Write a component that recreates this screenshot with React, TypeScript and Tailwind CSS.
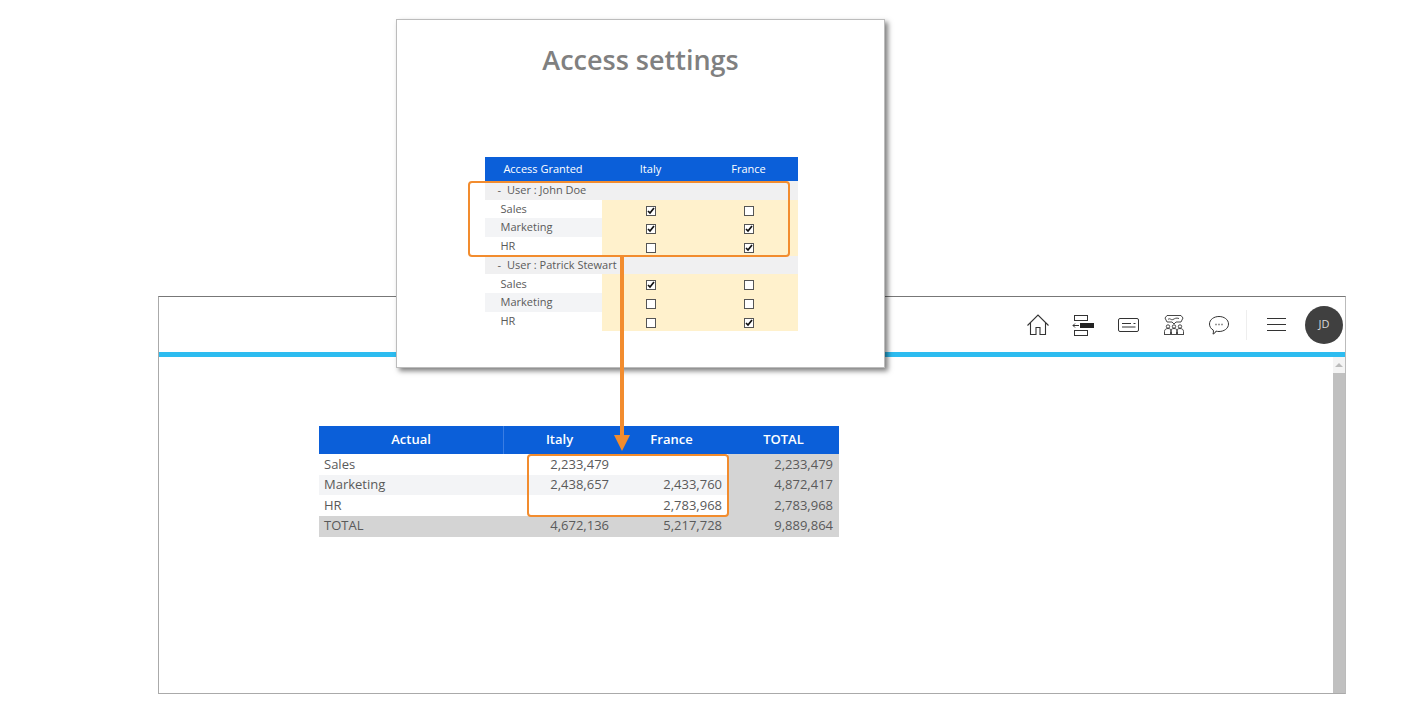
const font = "font-['Open_Sans',sans-serif]";

function Home() {
  return (
    <svg width="24" height="24" viewBox="0 0 24 24" fill="none" stroke="#333" strokeWidth="1.1">
      <path d="M1.5 12.5 12 2l10.5 10.5M4.5 10v11.5h5.5v-7h4v7h5.5V10" />
    </svg>
  );
}

function Hierarchy() {
  return (
    <svg width="24" height="24" viewBox="0 0 24 24" fill="none" stroke="#333" strokeWidth="1">
      <rect x="3.5" y="2.5" width="13" height="5" />
      <rect x="3.5" y="17.5" width="13" height="5" />
      <rect x="9" y="10" width="14" height="5" fill="#222" stroke="none" />
      <path d="M8 12.5H2M4 10.5l-2 2 2 2" />
    </svg>
  );
}

function Card() {
  return (
    <svg width="24" height="20" viewBox="0 0 24 20" fill="none" stroke="#333" strokeWidth="1">
      <rect x="1.5" y="3.5" width="20" height="13" rx="1.5" />
      <path d="M5 8.5h9M16.5 8.5h2M5 12h13.5" />
    </svg>
  );
}

function Team() {
  return (
    <svg width="24" height="24" viewBox="0 0 24 24" fill="none" stroke="#333" strokeWidth="0.9">
      <path d="M5 2.5h14l2 2.5-2 4h-5l-2 2-2-2H5L3 5z" />
      <path d="M6 6.5c2-2 3 1 5 0s3-2 6-1" />
      <circle cx="6" cy="13.5" r="1.7" />
      <circle cx="12" cy="13.5" r="1.7" />
      <circle cx="18" cy="13.5" r="1.7" />
      <path d="M2.5 21v-2.5c0-2 1.5-3 3.5-3s3.500 1 3.500 3V21M8.500 21v-2.500c0-2 1.500-3 3.500-3s3.500 1 3.500 3V21M14.500 21v-2.500c0-2 1.500-3 3.500-3s3.500 1 3.500 3V21M2 21.500h20" />
    </svg>
  );
}

function Bubble() {
  return (
    <svg width="22" height="22" viewBox="0 0 22 22" fill="none" stroke="#333" strokeWidth="1">
      <path d="M11 2.500c5 0 9.500 3 9.500 7.500s-4.500 7.500-9.500 7.500c-1 0-2-.1-3-.4-.5 1.500-1.500 2.500-3 3 .5-1.300.6-2.700.3-4C2.800 14.700 1.500 12.500 1.500 10c0-4.500 4.500-7.500 9.500-7.500z" />
      <path d="M7.500 10.500h1M10.500 10.500h1M13.500 10.500h1" strokeWidth="1.300" />
    </svg>
  );
}

function Check({ on }: { on: boolean }) {
  return (
    <span className="flex h-[10px] w-[10px] items-center justify-center border border-[#555] bg-white">
      {on && (
        <svg width="8" height="8" viewBox="0 0 8 8" fill="none" stroke="#111" strokeWidth="1.700">
          <path d="M1 4l2 2 4-5" />
        </svg>
      )}
    </span>
  );
}

const accessUsers = [
  {
    name: "User : John Doe",
    rows: [
      { label: "Sales", italy: true, france: false },
      { label: "Marketing", italy: true, france: true },
      { label: "HR", italy: false, france: true },
    ],
  },
  {
    name: "User : Patrick Stewart",
    rows: [
      { label: "Sales", italy: true, france: false },
      { label: "Marketing", italy: false, france: false },
      { label: "HR", italy: false, france: true },
    ],
  },
];

function AccessTable() {
  return (
    <div className="w-[313px] text-[11px] text-[#5a5a5a]">
      <div className="grid h-[24px] grid-cols-[117px_98px_98px] items-center bg-[#0b5fd9] text-white">
        <span className="text-center">Access Granted</span>
        <span className="text-center">Italy</span>
        <span className="text-center">France</span>
      </div>
      {accessUsers.map((user) => (
        <div key={user.name}>
          <div className="flex h-[18.700px] items-center bg-[#f0f0f1] pl-[13px]">
            <span className="mr-[6px]">-</span>
            {user.name}
          </div>
          {user.rows.map((row, i) => (
            <div key={row.label} className="grid h-[18.700px] grid-cols-[117px_98px_98px] items-center">
              <span className={`flex h-full items-center pl-[16px] ${i === 1 ? "bg-[#f3f4f6]" : ""}`}>{row.label}</span>
              <span className="flex h-full items-center justify-center bg-[#fff1cc] pt-[3px]">
                <Check on={row.italy} />
              </span>
              <span className="flex h-full items-center justify-center bg-[#fff1cc] pt-[3px]">
                <Check on={row.france} />
              </span>
            </div>
          ))}
        </div>
      ))}
    </div>
  );
}

const actuals = [
  { label: "Sales", italy: "2,233,479", france: "", total: "2,233,479" },
  { label: "Marketing", italy: "2,438,657", france: "2,433,760", total: "4,872,417" },
  { label: "HR", italy: "", france: "2,783,968", total: "2,783,968" },
];

function ActualTable() {
  return (
    <div className="w-[520px] text-[13px] text-[#5a5a5a]">
      <div className="grid h-[28px] grid-cols-[185px_111px_113px_111px] items-center bg-[#0b5fd9] font-semibold text-white">
        <span className="flex h-full items-center justify-center border-r border-[#3a7de3]">Actual</span>
        <span className="text-center">Italy</span>
        <span className="text-center">France</span>
        <span className="text-center">TOTAL</span>
      </div>
      {actuals.map((row, i) => (
        <div key={row.label} className="grid h-[20.500px] grid-cols-[185px_111px_113px_111px] items-center">
          <span className={`flex h-full items-center pl-[5px] ${i === 1 ? "bg-[#f3f4f6]" : ""}`}>{row.label}</span>
          <span className={`flex h-full items-center justify-end pr-[6px] ${i === 1 ? "bg-[#f3f4f6]" : ""}`}>{row.italy}</span>
          <span className={`flex h-full items-center justify-end pr-[6px] ${i === 1 ? "bg-[#f3f4f6]" : ""}`}>{row.france}</span>
          <span className="flex h-full items-center justify-end bg-[#d4d4d4] pr-[6px]">{row.total}</span>
        </div>
      ))}
      <div className="grid h-[21px] grid-cols-[185px_111px_113px_111px] items-center bg-[#d4d4d4]">
        <span className="pl-[5px]">TOTAL</span>
        <span className="pr-[6px] text-right">4,672,136</span>
        <span className="pr-[6px] text-right">5,217,728</span>
        <span className="pr-[6px] text-right">9,889,864</span>
      </div>
    </div>
  );
}

export default function App() {
  return (
    <div className={`relative h-[718px] w-[1415px] overflow-hidden bg-white pl-[158px] pt-[296px] ${font}`}>
      <div className="flex h-[398px] w-[1188px] flex-col border border-t-[#777] border-r-[#bbb] border-b-[#aaa] border-l-[#aaa]">
        <div className="flex h-[55px] items-center justify-end border-b-0 pr-[2px]">
          <div className="flex items-center">
            <span className="mr-[21px]"><Home /></span>
            <span className="mr-[22px]"><Hierarchy /></span>
            <span className="mr-[21px]"><Card /></span>
            <span className="mr-[22px]"><Team /></span>
            <span className="mr-[16px]"><Bubble /></span>
            <span className="mr-[20px] h-[30px] w-px bg-[#eeeeee]" />
            <span className="mr-[19px] flex w-[19px] flex-col gap-[5px]">
              <i className="h-px bg-[#333]" />
              <i className="h-px bg-[#333]" />
              <i className="h-px bg-[#333]" />
            </span>
            <span className="flex h-[38px] w-[38px] items-center justify-center rounded-full bg-[#404040] text-[11px] text-[#d8d8d8]">JD</span>
          </div>
        </div>
        <div className="h-[5px] bg-[#2dbcf0]" />
        <div className="flex min-h-0 flex-1">
          <div className="flex-1 pl-[160px] pt-[69px]">
            <ActualTable />
          </div>
          <div className="flex w-[12px] flex-col bg-[#f4f4f4]">
            <div className="flex h-[16px] items-center justify-center">
              <span className="h-0 w-0 border-x-[4px] border-b-[4px] border-x-transparent border-b-[#bbb]" />
            </div>
            <div className="flex-1 bg-[#c0c0c0]" />
          </div>
        </div>
      </div>

      {/* slide laid over the app */}
      <div className="absolute left-[396px] top-[19px] flex h-[349px] w-[489px] flex-col items-center border border-[#bcbcbc] bg-white shadow-[3px_3px_5px_rgba(0,0,0,0.5)]">
        <h1 className="mt-[21px] pl-[0px] text-[27px] font-semibold leading-[38px] text-[#808080]">Access settings</h1>
        <div className="ml-[1px] mt-[78px]">
          <AccessTable />
        </div>
      </div>

      {/* callouts */}
      <div className="absolute left-[468px] top-[181px] h-[76px] w-[322px] rounded-[4px] border-2 border-[#f28c2e]" />
      <div className="absolute left-[527px] top-[454px] h-[63px] w-[202px] rounded-[4px] border-2 border-[#f28c2e]" />
      <div className="absolute left-[620px] top-[257px] h-[179px] w-[4px] bg-[#f28c2e]" />
      <div className="absolute left-[614px] top-[435px] h-0 w-0 border-x-[8px] border-t-[16px] border-x-transparent border-t-[#f28c2e]" />
    </div>
  );
}
